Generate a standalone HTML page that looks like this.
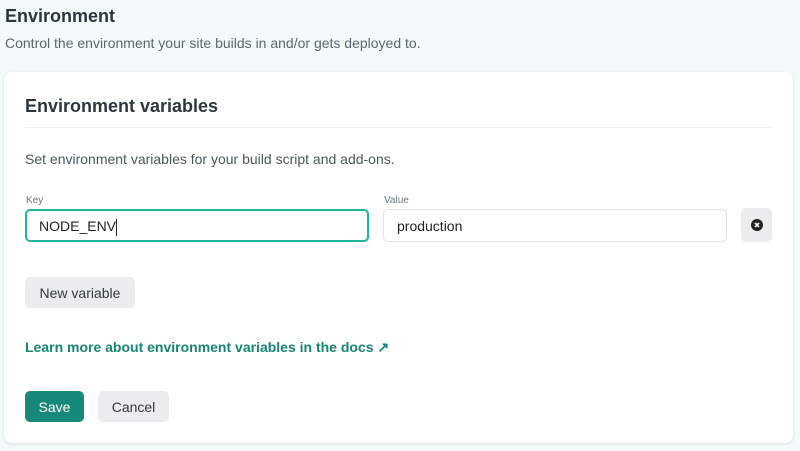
<!DOCTYPE html>
<html><head><style>
*{box-sizing:border-box;margin:0;padding:0}
body{width:800px;height:451px;overflow:hidden;background:#f4fafa;font-family:"Liberation Sans",sans-serif;color:#2e3a42;position:relative}
.a{position:absolute}
.h1{left:5px;top:6px;font-size:18px;font-weight:bold;color:#2b363d}
.sub{left:5px;top:35px;font-size:14px;color:#5a6670}
.card{left:4px;top:72px;width:789px;height:371px;background:#fff;border-radius:8px;box-shadow:0 1px 3px rgba(0,0,0,.12)}
.h2{left:25px;top:96px;font-size:18px;font-weight:bold;color:#2b363d}
.sep{left:25px;top:127px;width:747px;height:1px;background:#eef0f1}
.desc{left:25px;top:151px;font-size:14px;color:#4a5660}
.lbl{font-size:10px;color:#6b757c;top:195px}
.inp{top:209px;height:33px;border-radius:5px;font-size:14px;padding:0 13px;line-height:32px;color:#222}
.btn{border-radius:5px;font-size:14px;text-align:center;background:#ebeced;color:#2e3a42}
</style></head><body>
<div class="a h1">Environment</div>
<div class="a sub">Control the environment your site builds in and/or gets deployed to.</div>
<div class="a card"></div>
<div class="a h2">Environment variables</div>
<div class="a sep"></div>
<div class="a desc">Set environment variables for your build script and add-ons.</div>
<div class="a lbl" style="left:26px">Key</div>
<div class="a lbl" style="left:384px">Value</div>
<div class="a inp" style="left:25px;width:344px;border:2px solid #1fb3a0;line-height:30px;padding-left:12px">NODE_ENV<span style="display:inline-block;width:1px;height:17px;background:#222;vertical-align:middle"></span></div>
<div class="a inp" style="left:383px;width:344px;border:1px solid #e0e3e5">production</div>
<div class="a btn" style="left:741px;top:208px;width:31px;height:34px"><svg width="12" height="12" viewBox="0 0 12 12" style="margin-top:11px"><circle cx="6" cy="6" r="6" fill="#222"/><path d="M4 4L8 8M8 4L4 8" stroke="#fff" stroke-width="1.6"/></svg></div>
<div class="a btn" style="left:25px;top:277px;width:110px;height:31px;line-height:32px">New variable</div>
<div class="a" style="left:25px;top:339px;font-size:14px;font-weight:bold;color:#158575">Learn more about environment variables in the docs ↗</div>
<div class="a btn" style="left:25px;top:391px;width:59px;height:31px;line-height:32px;background:#17897a;color:#fff">Save</div>
<div class="a btn" style="left:98px;top:391px;width:71px;height:31px;line-height:32px">Cancel</div>
</body></html>
